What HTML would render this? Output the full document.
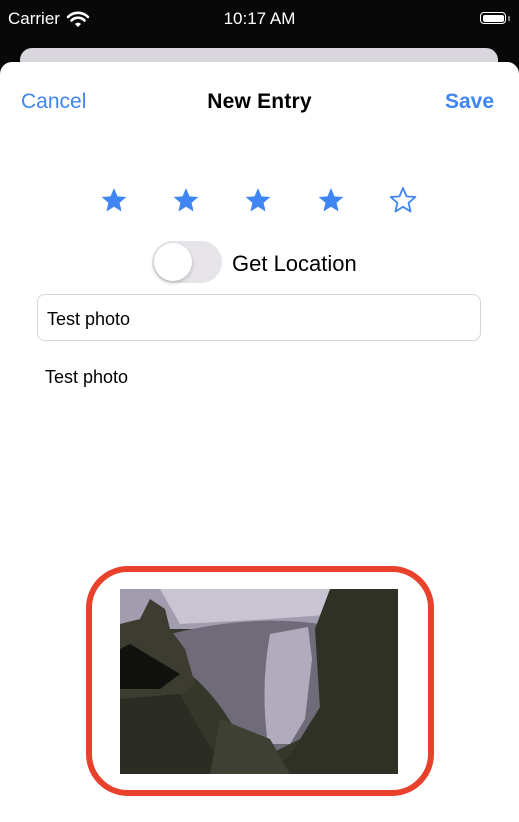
<!DOCTYPE html>
<html><head><meta charset="utf-8">
<style>
html,body{margin:0;padding:0;width:519px;height:806px;overflow:hidden;background:#080808;font-family:"Liberation Sans",sans-serif}
.abs{position:absolute}
</style></head><body>
<div class="abs" style="left:8px;top:9px;color:#fff;font-size:17px">Carrier</div>
<svg class="abs" style="left:66px;top:11px" width="24" height="18" viewBox="0 0 24 18"><path d="M2 6a14 14 0 0 1 20 0" stroke="#fff" stroke-width="2.6" fill="none" stroke-linecap="round"/><path d="M5.5 9.5a9 9 0 0 1 13 0" stroke="#fff" stroke-width="2.6" fill="none" stroke-linecap="round"/><path d="M9 13a4 4 0 0 1 6 0L12 16z" fill="#fff"/></svg>
<div class="abs" style="left:0;width:519px;top:9px;text-align:center;color:#fff;font-size:17px">10:17 AM</div>
<div class="abs" style="left:480px;top:12px;width:26px;height:12px;border:1.5px solid #fff;border-radius:4px;box-sizing:border-box;padding:1.5px"><div style="background:#fff;width:100%;height:100%;border-radius:2px"></div></div>
<div class="abs" style="left:508px;top:16px;width:2px;height:5px;background:#888;border-radius:1px"></div>
<div class="abs" style="left:20px;top:48px;width:478px;height:40px;background:#d9d6dd;border-radius:12px"></div>
<div class="abs" style="left:0;top:62px;width:519px;height:760px;background:#fff;border-radius:12px 12px 0 0"></div>
<div class="abs" style="left:21px;top:90px;color:#3f86f2;font-size:21px">Cancel</div>
<div class="abs" style="left:0;width:519px;top:90px;text-align:center;color:#000;font-size:21px;font-weight:bold;letter-spacing:0.2px">New Entry</div>
<div class="abs" style="left:445px;top:90px;color:#3f86f2;font-size:21px;font-weight:bold">Save</div>
<svg class="abs" style="left:0;top:185px" width="519" height="32">
<defs><path id="s" d="M0,-13 L3.5,-4.6 L12.4,-4 L5.6,1.8 L7.6,10.5 L0,5.8 L-7.6,10.5 L-5.6,1.8 L-12.4,-4 L-3.5,-4.6 Z"/></defs>
<use href="#s" x="114" y="16" fill="#3f86f2"/>
<use href="#s" x="186" y="16" fill="#3f86f2"/>
<use href="#s" x="258" y="16" fill="#3f86f2"/>
<use href="#s" x="331" y="16" fill="#3f86f2"/>
<use href="#s" x="403" y="16" fill="none" stroke="#3f86f2" stroke-width="1.8" stroke-linejoin="round"/>
</svg>
<div class="abs" style="left:152px;top:241px;width:70px;height:42px;background:#e6e4e9;border-radius:21px"></div>
<div class="abs" style="left:154px;top:243px;width:38px;height:38px;background:#fff;border-radius:50%;box-shadow:0 2px 4px rgba(0,0,0,0.2)"></div>
<div class="abs" style="left:232px;top:251px;font-size:22px;color:#000">Get Location</div>
<div class="abs" style="left:37px;top:294px;width:444px;height:47px;border:1px solid #d6d4da;border-radius:8px;box-sizing:border-box"></div>
<div class="abs" style="left:47px;top:309px;font-size:18px;color:#000">Test photo</div>
<div class="abs" style="left:45px;top:367px;font-size:18px;color:#000">Test photo</div>
<div class="abs" style="left:86px;top:566px;width:348px;height:230px;border:6px solid #e8412c;border-radius:42px;box-sizing:border-box"></div>
<svg class="abs" style="left:120px;top:589px" width="278" height="185" viewBox="0 0 278 185">
<rect width="278" height="185" fill="#36372b"/>
<path d="M0 0H278V40H0Z" fill="#a19cae"/>
<path d="M40 0H230L220 25 150 30 60 35Z" fill="#c8c4d1"/>
<path d="M50 45 Q130 25 200 35 L205 110 L180 150 L150 165 L120 150 Q100 110 70 85 Z" fill="#6f6b79"/>
<path d="M150 45 L188 38 L192 70 L185 130 L170 155 L148 155 Q140 100 150 45Z" fill="#b1acbd"/>
<path d="M210 0 L278 0 L278 185 L150 185 L175 160 L200 120 L195 40Z" fill="#2f3126"/>
<path d="M0 35 L20 30 L30 10 L45 20 L50 40 L65 60 L75 95 L55 110 L0 110Z" fill="#3c3d30"/>
<path d="M0 60 L10 55 L60 85 L40 100 L0 100Z" fill="#111110"/>
<path d="M0 110 L60 105 L85 150 L110 185 L0 185Z" fill="#2b2c23"/>
<path d="M100 130 L150 150 L170 185 L90 185Z" fill="#3f4034"/>
</svg>
</body></html>
